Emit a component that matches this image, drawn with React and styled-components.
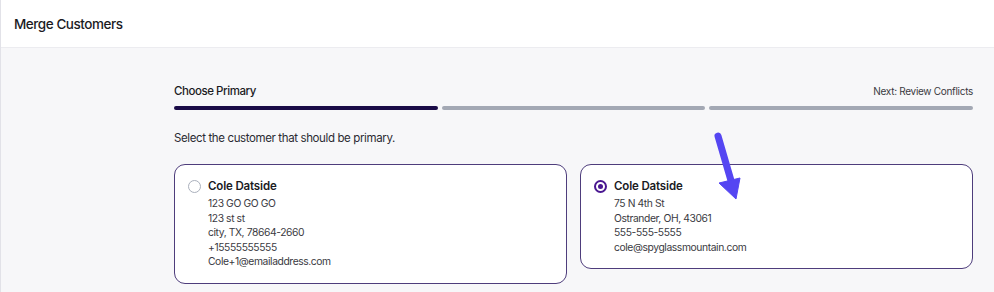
import styled, { createGlobalStyle } from 'styled-components'

const GlobalStyle = createGlobalStyle`
  html, body {
    margin: 0;
    padding: 0;
    background: #f7f7f9;
    font-family: Inter, "Noto Sans", sans-serif;
    color: #1b1b1f;
  }
`

const Page = styled.div`
  width: 994px;
  height: 292px;
  overflow: hidden;
  border-left: 1px solid #e2e2e8;
  box-sizing: border-box;
`

const Header = styled.header`
  height: 47px;
  background: #fff;
  border-bottom: 1px solid #ececf0;
  display: flex;
  align-items: center;
  padding-left: 13px;
`

const Title = styled.h1`
  margin: 0;
  font-size: 13.5px;
  font-weight: 500;
  letter-spacing: -0.45px;
`

const Content = styled.main`
  padding: 35px 21px 0 173px;
  position: relative;
`

const StepRow = styled.div`
  display: flex;
  justify-content: space-between;
  align-items: center;
  height: 16px;
`

const StepTitle = styled.div`
  font-size: 11.5px;
  font-weight: 500;
  letter-spacing: -0.45px;
`

const NextLabel = styled.div`
  font-size: 10px;
  letter-spacing: -0.3px;
  color: #3a3a42;
`

const Progress = styled.div`
  display: flex;
  gap: 4px;
  margin-top: 7px;
`

const Segment = styled.div`
  flex: 1;
  height: 4px;
  border-radius: 2px;
  background: ${p => (p.$active ? '#1a0b47' : '#a3a8b4')};
`

const Instruction = styled.p`
  margin: 21px 0 0;
  font-size: 11.5px;
  letter-spacing: -0.38px;
  color: #2b2b33;
`

const Cards = styled.div`
  display: flex;
  align-items: flex-start;
  gap: 13px;
  margin-top: 19px;
`

const Card = styled.div`
  flex: 1;
  display: flex;
  gap: 7px;
  background: #fff;
  border: 1px solid #4e3d7c;
  border-radius: 11px;
  padding: 13px 12px 14px 13px;
`

const Radio = styled.span`
  width: 13px;
  height: 13px;
  margin-top: 2px;
  flex-shrink: 0;
  box-sizing: border-box;
  border-radius: 50%;
  border: ${p => (p.$checked ? '2px solid #4a1791' : '1px solid #aab0bc')};
  display: flex;
  align-items: center;
  justify-content: center;
  &::after {
    content: '';
    width: 5px;
    height: 5px;
    border-radius: 50%;
    background: ${p => (p.$checked ? '#4a1791' : 'transparent')};
  }
`

const Info = styled.div`
  display: flex;
  flex-direction: column;
`

const Name = styled.div`
  font-size: 11.5px;
  font-weight: 600;
  letter-spacing: -0.15px;
  line-height: 16px;
  margin-bottom: 2px;
`

const Line = styled.div`
  font-size: 10.3px;
  letter-spacing: -0.4px;
  line-height: 14.5px;
  color: #3a3a42;
`

const Arrow = styled.svg`
  position: absolute;
  left: 706px;
  top: 80px;
  pointer-events: none;
`

const customers = [
  {
    checked: false,
    lines: ['123 GO GO GO', '123 st st', 'city, TX, 78664-2660', '+15555555555', 'Cole+1@emailaddress.com'],
  },
  {
    checked: true,
    lines: ['75 N 4th St', 'Ostrander, OH, 43061', '555-555-5555', 'cole@spyglassmountain.com'],
  },
]

export default function App() {
  return (
    <Page>
      <GlobalStyle />
      <Header>
        <Title>Merge Customers</Title>
      </Header>
      <Content>
        <StepRow>
          <StepTitle>Choose Primary</StepTitle>
          <NextLabel>Next: Review Conflicts</NextLabel>
        </StepRow>
        <Progress>
          <Segment $active />
          <Segment />
          <Segment />
        </Progress>
        <Instruction>Select the customer that should be primary.</Instruction>
        <Cards>
          {customers.map((c, i) => (
            <Card key={i}>
              <Radio $checked={c.checked} />
              <Info>
                <Name>Cole Datside</Name>
                {c.lines.map(l => (
                  <Line key={l}>{l}</Line>
                ))}
              </Info>
            </Card>
          ))}
        </Cards>
        <Arrow width="40" height="80" viewBox="0 0 40 80">
          <path d="M11 8 L25 56" stroke="#5546f2" strokeWidth="7" strokeLinecap="round" fill="none" />
          <path d="M12 55 L33 50 L29 71 Z" fill="#5546f2" strokeLinejoin="round" stroke="#5546f2" strokeWidth="1" />
        </Arrow>
      </Content>
    </Page>
  )
}
